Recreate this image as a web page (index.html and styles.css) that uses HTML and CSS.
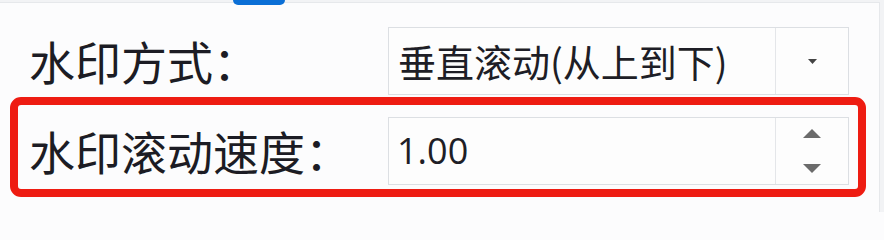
FILE: index.html
```html
<!DOCTYPE html>
<html lang="zh-CN">
<head>
<meta charset="utf-8">
<title>水印设置</title>
<link rel="stylesheet" href="styles.css">
</head>
<body>
<div class="panel">
  <div class="tab"></div>
  <div class="form">
    <div class="row">
      <div class="label">水印方式：</div>
      <div class="field">
        <div class="value">垂直滚动(从上到下)</div>
        <div class="btn">
          <svg width="9" height="5" viewBox="0 0 9 5"><path d="M0 0H9L4.5 5Z" fill="#444"/></svg>
        </div>
      </div>
    </div>
    <div class="row">
      <div class="label">水印滚动速度：</div>
      <div class="field">
        <div class="value num">1.00</div>
        <div class="btn spin">
          <svg width="18" height="9" viewBox="0 0 18 9"><path d="M0 9H18L9 0Z" fill="#6b6b6b"/></svg>
          <svg width="18" height="9" viewBox="0 0 18 9"><path d="M0 0H18L9 9Z" fill="#6b6b6b"/></svg>
        </div>
      </div>
    </div>
  </div>
  <div class="highlight"></div>
</div>
</body>
</html>
```

FILE: styles.css
```css
html, body {
  margin: 0;
  padding: 0;
}
html {
  width: 884px;
  height: 212px;
  overflow: hidden;
  background: #fcfcfd;
}
body {
  width: 884px;
  height: 212px;
  box-sizing: border-box;
  padding-top: 2px;
  background: #f2f3f5;
  overflow: hidden;
  font-family: "Noto Sans CJK SC", "Noto Sans", sans-serif;
  color: #1c1c24;
}
.panel {
  position: relative;
  width: 880px;
  height: 210px;
  background: #fcfcfd;
  border-top: 1px solid #e6e8eb;
  border-right: 1px solid #e6e8eb;
  box-sizing: border-box;
}
.tab {
  position: absolute;
  left: 233px;
  top: -3px;
  width: 52px;
  height: 5px;
  background: #0b6fd6;
  border-radius: 0 0 6px 6px;
}
.form {
  padding: 24px 0 0 29px;
  display: flex;
  flex-direction: column;
  gap: 22px;
}
.row {
  display: flex;
  align-items: center;
  height: 68px;
}
.label {
  width: 359px;
  font-size: 46px;
  line-height: 1;
  padding-bottom: 3px;
  white-space: nowrap;
}
.field {
  width: 461px;
  height: 68px;
  box-sizing: border-box;
  border: 1px solid #dcdfe3;
  background: #fdfdfd;
  display: flex;
}
.value {
  flex: 1;
  display: flex;
  align-items: center;
  padding-left: 9px;
  font-size: 38px;
  line-height: 1;
  color: #1e1e26;
  white-space: nowrap;
}
.value.num {
  font-family: "Open Sans", "Noto Sans", sans-serif;
  font-size: 36px;
  padding-left: 8px;
}
.btn {
  width: 72px;
  border-left: 1px solid #e4e6e9;
  display: flex;
  align-items: center;
  justify-content: center;
}
.btn.spin {
  flex-direction: column;
  gap: 26px;
}
.highlight {
  position: absolute;
  left: 10px;
  top: 94px;
  width: 856px;
  height: 100px;
  box-sizing: border-box;
  border: 8px solid #ee1c12;
  border-radius: 11px;
}
```
